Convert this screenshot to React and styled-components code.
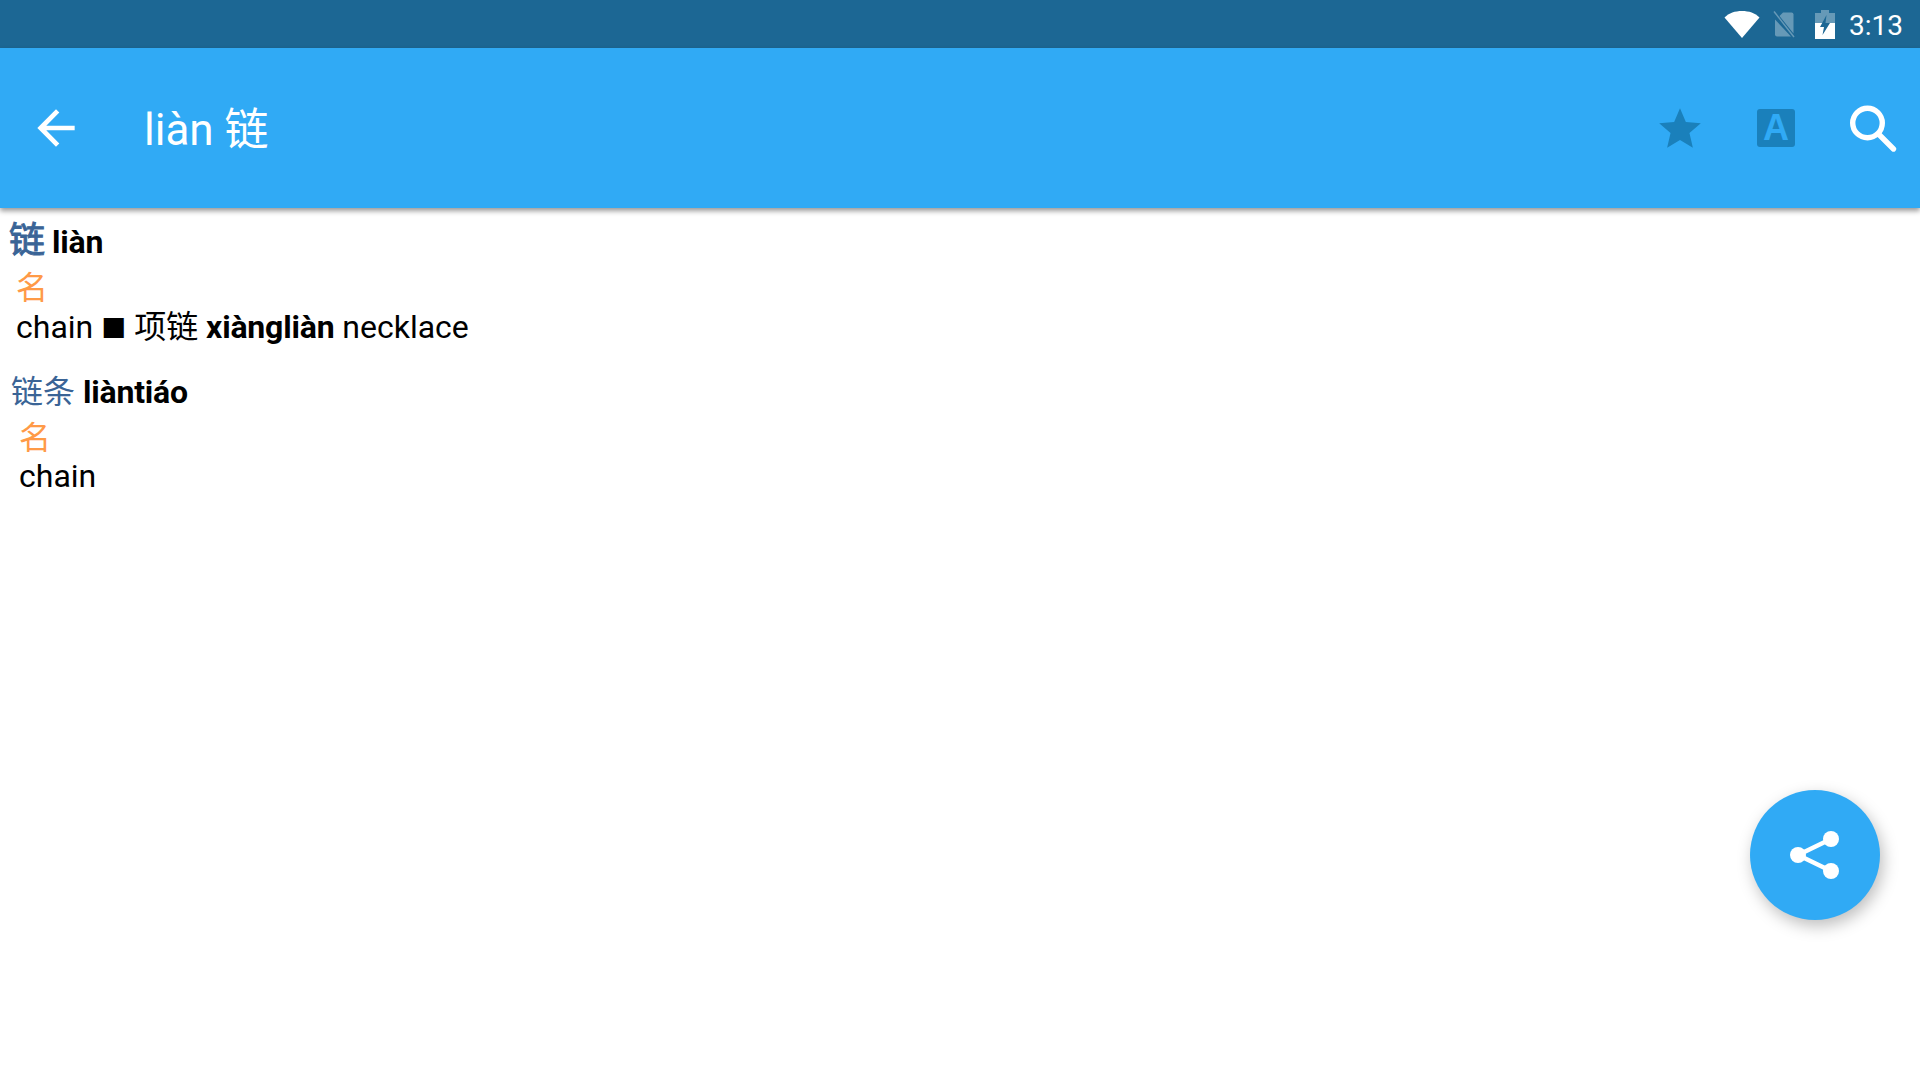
import React from "react";
import styled, { createGlobalStyle } from "styled-components";

const Global = createGlobalStyle`
  html, body { margin: 0; padding: 0; background: #fff; }
  body { font-family: Roboto, "Noto Sans CJK SC", sans-serif; }
`;
const CJK = `Roboto, "Noto Sans CJK SC", sans-serif`;

const Page = styled.div`
  position: relative; width: 1920px; height: 1080px; overflow: hidden;
  display: flex; flex-direction: column; background: #fff;
`;
const StatusBar = styled.div`
  height: 48px; background: #1c6794; display: flex; align-items: center;
  justify-content: flex-end; padding-right: 17px; flex: none;
`;
const StatusIcon = styled.svg`
  display: block; flex: none; margin-right: ${p => p.$gap}px;
`;
const Clock = styled.span`
  color: #fff; font: 400 28px/48px Roboto, sans-serif; padding-top: 4px;
`;
const AppBar = styled.header`
  height: 160px; flex: none; background: #30aaf5; display: flex; align-items: center;
  box-shadow: 0 3px 5px rgba(0,0,0,.4); position: relative; z-index: 1;
`;
const BackIcon = styled.svg`
  width: 56px; height: 56px; margin-left: 28px; flex: none; fill: #fff;
`;
const Title = styled.h1`
  margin: 4px 0 0 60px; flex: 1; font: 400 44px/60px ${CJK}; color: #fff;
`;
const Actions = styled.div`
  display: flex; align-items: center; margin-right: 14px;
`;
const StarIcon = styled.svg`
  width: 50px; height: 50px; margin-top: 2px; fill: #1a80bb; flex: none;
`;
const FontBadge = styled.span`
  width: 38px; height: 38px; margin-left: 52px; border-radius: 3px; background: #1a80bb;
  color: #30aaf5; font: 700 36px/38px "Liberation Sans", sans-serif; text-align: center; flex: none;
`;
const SearchIcon = styled.svg`
  width: 64px; height: 64px; margin-left: 47px; fill: none; stroke: #fff; flex: none;
`;
const Content = styled.main`
  flex: 1; padding: 10px 0 0 0; color: #000;
`;
const Entry = styled.section`
  padding-left: ${p => p.$indent}px; margin-bottom: ${p => p.$after}px;
`;
const Headword = styled.div`
  font: 400 32px/46px ${CJK}; display: flex; align-items: baseline;
  gap: ${p => p.$gap}px; margin-left: ${p => p.$shift}px;
`;
const Hanzi = styled.span`
  color: #3a6496; font-size: ${p => p.$size}px;
  ${p => p.$heavy && `-webkit-text-stroke: 1px #3a6496;`}
`;
const Pinyin = styled.b`
  font-weight: 700; letter-spacing: -0.2px;
`;
const Pos = styled.div`
  color: #ff9a47; font: 400 32px/40px ${CJK}; padding-left: 7px; margin-top: 3px;
`;
const Definition = styled.p`
  margin: -${p => p.$lift}px 0 0; padding-left: 7px; font: 400 32px/44px ${CJK};
`;
const Term = styled.b`
  font-weight: 700; letter-spacing: -0.2px;
`;
const Bullet = styled.span`
  font-size: 25px;
`;
const Fab = styled.button`
  position: absolute; left: 1750px; top: 790px; width: 130px; height: 130px; padding: 0; border: 0;
  border-radius: 50%; background: #30aaf5; display: flex; align-items: center; justify-content: center;
  box-shadow: 3px 6px 16px rgba(0,0,0,.26);
`;

export default function App() {
  return (
    <Page>
      <Global />
      <StatusBar>
        <StatusIcon $gap={13} width="36" height="30" viewBox="0 0 36 30">
          <path d="M0.5 8.5C5 4 11 2 18 2s13 2 17.500 6.500L18 29z" fill="#fff" />
        </StatusIcon>
        <StatusIcon $gap={20} width="22" height="28" viewBox="0 0 22 28">
          <path d="M6.500 6 10 2.500h8.500a2 2 0 0 1 2 2v19z" fill="#fff" fillOpacity=".33" />
          <path d="M2 9.500v15a2 2 0 0 0 2 2h14z" fill="#fff" fillOpacity=".33" />
          <path d="M1 1.500 21 27" stroke="#fff" strokeOpacity=".33" strokeWidth="1.500" />
        </StatusIcon>
        <StatusIcon $gap={14} width="20" height="30" viewBox="0 0 20 30">
          <path d="M6 1h8v3h6v10H0V4h6z" fill="#fff" fillOpacity=".33" />
          <path d="M0 14h20v16H0z" fill="#fff" />
          <path d="M11.500 6 5 18h4l-1.500 8L15 14h-4.500z" fill="#1c6794" />
        </StatusIcon>
        <Clock>3:13</Clock>
      </StatusBar>
      <AppBar>
        <BackIcon viewBox="0 0 24 24">
          <path d="M20 11H7.830l5.590-5.590L12 4l-8 8 8 8 1.410-1.410L7.830 13H20v-2z" />
        </BackIcon>
        <Title>liàn 链</Title>
        <Actions>
          <StarIcon viewBox="0 0 24 24">
            <path d="M12 17.270 18.180 21l-1.640-7.030L22 9.240l-7.190-.610L12 2 9.190 8.630 2 9.240l5.460 4.730L5.820 21z" />
          </StarIcon>
          <FontBadge>A</FontBadge>
          <SearchIcon viewBox="0 0 64 64">
            <circle cx="25.500" cy="27" r="14.800" strokeWidth="5.400" />
            <path d="M36.500 38 51.500 53" strokeWidth="5.400" strokeLinecap="round" />
          </SearchIcon>
        </Actions>
      </AppBar>
      <Content>
        <Entry $indent={9} $after={17}>
          <Headword $gap={7} $shift={0}>
            <Hanzi $size={36} $heavy>链</Hanzi>
            <Pinyin>liàn</Pinyin>
          </Headword>
          <Pos>名</Pos>
          <Definition $lift={3}>chain <Bullet>■</Bullet> 项链 <Term>xiàngliàn</Term> necklace</Definition>
        </Entry>
        <Entry $indent={12} $after={0}>
          <Headword $gap={8} $shift={-1}>
            <Hanzi $size={32}>链条</Hanzi>
            <Pinyin>liàntiáo</Pinyin>
          </Headword>
          <Pos>名</Pos>
          <Definition $lift={4}>chain</Definition>
        </Entry>
      </Content>
      <Fab aria-label="share">
        <svg width="60" height="60" viewBox="0 0 60 60">
          <path d="M13 30 46 14M13 30 46 46" stroke="#fff" strokeWidth="4.500" />
          <circle cx="13" cy="30" r="8" fill="#fff" />
          <circle cx="46" cy="14" r="8" fill="#fff" />
          <circle cx="46" cy="46" r="8" fill="#fff" />
        </svg>
      </Fab>
    </Page>
  );
}
